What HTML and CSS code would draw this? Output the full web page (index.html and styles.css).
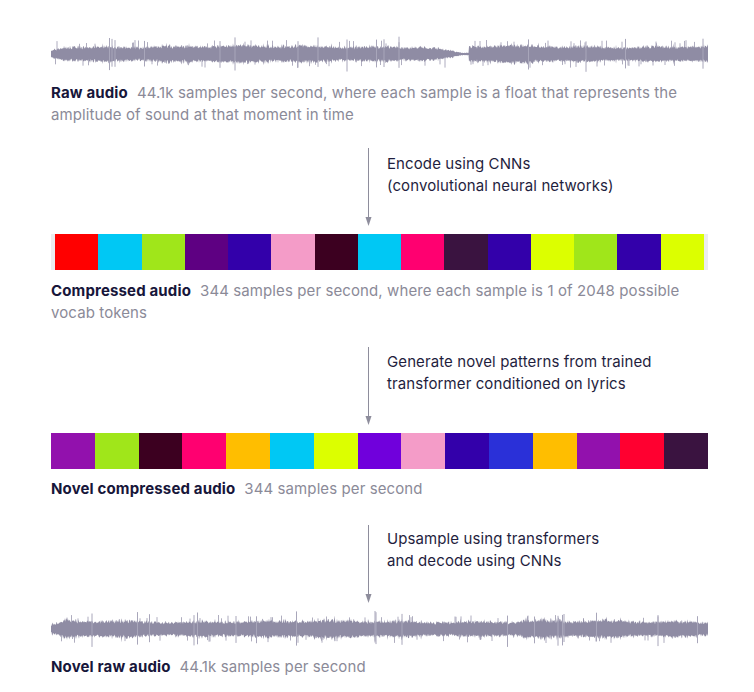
FILE: index.html
```html
<!DOCTYPE html>
<html lang="en">
<head>
<meta charset="utf-8">
<title>Jukebox pipeline</title>
<link rel="stylesheet" href="styles.css">
</head>
<body>
<main class="diagram">
  <svg class="wave wave-raw" data-seed="11" data-quiet="418" viewBox="0 0 657 36" preserveAspectRatio="none"></svg>
  <p class="caption caption-1"><b class="label">Raw audio</b><span class="desc">44.1k samples per second, where each sample is a float that represents the amplitude of sound at that moment in time</span></p>

  <div class="step step-1">
    <svg class="arrow" viewBox="0 0 9 78" preserveAspectRatio="none"><path class="arrow-line" d="M4.5 0V72"/><path class="arrow-head" d="M1.5 69L4.5 78L7.5 69Z"/></svg>
    <p class="step-text">Encode using CNNs<br>(convolutional neural networks)</p>
  </div>

  <div class="tokens tokens-padded">
    <span class="t red"></span><span class="t cyan"></span><span class="t green"></span><span class="t plum"></span><span class="t indigo"></span><span class="t pink"></span><span class="t maroon"></span><span class="t cyan"></span><span class="t rose"></span><span class="t aubergine"></span><span class="t indigo"></span><span class="t lime"></span><span class="t green"></span><span class="t indigo"></span><span class="t lime"></span>
  </div>
  <p class="caption caption-2"><b class="label">Compressed audio</b><span class="desc">344 samples per second, where each sample is 1 of 2048 possible vocab tokens</span></p>

  <div class="step step-2">
    <svg class="arrow" viewBox="0 0 9 78" preserveAspectRatio="none"><path class="arrow-line" d="M4.5 0V72"/><path class="arrow-head" d="M1.5 69L4.5 78L7.5 69Z"/></svg>
    <p class="step-text">Generate novel patterns from trained<br>transformer conditioned on lyrics</p>
  </div>

  <div class="tokens">
    <span class="t violet"></span><span class="t green"></span><span class="t maroon"></span><span class="t rose"></span><span class="t amber"></span><span class="t cyan"></span><span class="t lime"></span><span class="t purple"></span><span class="t pink"></span><span class="t indigo"></span><span class="t blue"></span><span class="t amber"></span><span class="t violet"></span><span class="t scarlet"></span><span class="t aubergine"></span>
  </div>
  <p class="caption caption-3"><b class="label">Novel compressed audio</b><span class="desc">344 samples per second</span></p>

  <div class="step step-3">
    <svg class="arrow" viewBox="0 0 9 78" preserveAspectRatio="none"><path class="arrow-line" d="M4.5 0V72"/><path class="arrow-head" d="M1.5 69L4.5 78L7.5 69Z"/></svg>
    <p class="step-text">Upsample using transformers<br>and decode using CNNs</p>
  </div>

  <svg class="wave wave-novel" data-seed="29" viewBox="0 0 657 36" preserveAspectRatio="none"></svg>
  <p class="caption caption-4"><b class="label">Novel raw audio</b><span class="desc">44.1k samples per second</span></p>
</main>
<script src="script.js"></script>
</body>
</html>
```

FILE: styles.css
```css
html, body {
  margin: 0;
  padding: 0;
  background: #ffffff;
}

body {
  font-family: Inter, "Noto Sans", "Liberation Sans", sans-serif;
  font-size: 15px;
  line-height: 22px;
  color: #1d1c3d;
}

.diagram {
  width: 657px;
  padding: 36px 0 0 51px;
  display: flex;
  flex-direction: column;
}

.wave {
  display: block;
  width: 657px;
  height: 36px;
}

.wave-novel {
  margin-top: 8px;
}

.caption {
  margin: 10px 0 0;
  color: #8b8a98;
}

.label {
  font-weight: 700;
  color: #17163a;
  letter-spacing: 0.15px;
  padding-right: 9px;
}

.desc {
  color: #8b8a98;
  letter-spacing: 0.1px;
}

.caption-3,
.caption-4 {
  margin-top: 9px;
}

.step {
  display: flex;
  align-items: flex-start;
  padding-left: 313px;
  gap: 14px;
}

.step-1 { margin-top: 22px; }
.step-2 { margin-top: 23px; }
.step-3 { margin-top: 25px; }

.arrow {
  display: block;
  width: 9px;
  height: 78px;
  flex: none;
}

.arrow-line {
  stroke: #8e8d9c;
  stroke-width: 1;
  fill: none;
}

.arrow-head {
  fill: #8e8d9c;
}

.step-text {
  margin: 4px 0 0;
  color: #1f1e3e;
  letter-spacing: 0.1px;
}

.step-1 .step-text { margin-top: 5px; }
.step-3 .step-text { margin-top: 3px; }

.tokens {
  display: flex;
  height: 36px;
  margin-top: 8px;
}

.tokens-padded {
  background: #ececee;
  padding: 0 4px;
}

.t {
  flex: 1 1 0;
}

.red { background: #ff0000; }
.scarlet { background: #ff0030; }
.cyan { background: #00c8f4; }
.green { background: #a0e61a; }
.plum { background: #5e0082; }
.indigo { background: #3300aa; }
.pink { background: #f49cc8; }
.maroon { background: #3c0020; }
.rose { background: #ff0070; }
.aubergine { background: #3a1340; }
.lime { background: #dcff00; }
.violet { background: #9211ad; }
.amber { background: #ffbe00; }
.purple { background: #7000dc; }
.blue { background: #2a30d8; }
```

FILE: script.js
```js
(function () {
  function rng(seed) {
    return function () {
      seed |= 0;
      seed = (seed + 0x6d2b79f5) | 0;
      var t = Math.imul(seed ^ (seed >>> 15), 1 | seed);
      t = (t + Math.imul(t ^ (t >>> 7), 61 | t)) ^ t;
      return ((t ^ (t >>> 14)) >>> 0) / 4294967296;
    };
  }
  var NS = "http://www.w3.org/2000/svg";
  var waves = document.querySelectorAll(".wave");
  for (var k = 0; k < waves.length; k++) {
    var svg = waves[k];
    var r = rng(+svg.getAttribute("data-seed"));
    var quiet = svg.getAttribute("data-quiet") ? +svg.getAttribute("data-quiet") : -1;
    var W = 657, c = 18;
    var top = [], bot = [], spikes = "", hairs = "";
    var p1 = r() * 6, p2 = r() * 6;
    for (var x = 0; x <= W; x += 0.5) {
      var env = 0.9 + 0.08 * Math.sin(x / 41 + p1) + 0.07 * Math.sin(x / 11 + p2);
      if (x < 14) env *= 0.45 + 0.55 * (x / 14);
      if (quiet > 0 && x > quiet - 45 && x < quiet) {
        env *= Math.max(0.16, (quiet - x) / 45);
      }
      var a = env * (6.6 + r() * 3.2);
      if (r() < 0.08) a += r() * 3 * env;
      top.push(x.toFixed(1) + "," + (c - a * (0.82 + r() * 0.3)).toFixed(2));
      bot.push(x.toFixed(1) + "," + (c + a * (0.82 + r() * 0.3)).toFixed(2));
      if (env > 0.6 && r() < 0.012) {
        var s1 = 12 + r() * 6, s2 = 12 + r() * 6;
        spikes += "M" + x.toFixed(1) + " " + (c - s1).toFixed(1) + "V" + (c + s2).toFixed(1);
      }
      if (env > 0.5 && r() < 0.07) {
        var h = 10 + r() * 4;
        hairs += "M" + x.toFixed(1) + " " + (r() < 0.5 ? (c - h).toFixed(1) + "V" + c : c + "V" + (c + h).toFixed(1));
      }
    }
    var body = document.createElementNS(NS, "path");
    body.setAttribute("d", "M" + top.join("L") + "L" + bot.reverse().join("L") + "Z");
    body.setAttribute("fill", "#8f8ca4");
    var hp = document.createElementNS(NS, "path");
    hp.setAttribute("d", hairs);
    hp.setAttribute("stroke", "#9b98af");
    hp.setAttribute("stroke-width", "0.8");
    var sp = document.createElementNS(NS, "path");
    sp.setAttribute("d", spikes);
    sp.setAttribute("stroke", "#a8a6ba");
    sp.setAttribute("stroke-width", "1");
    svg.appendChild(hp);
    svg.appendChild(body);
    svg.appendChild(sp);
  }
})();
```
